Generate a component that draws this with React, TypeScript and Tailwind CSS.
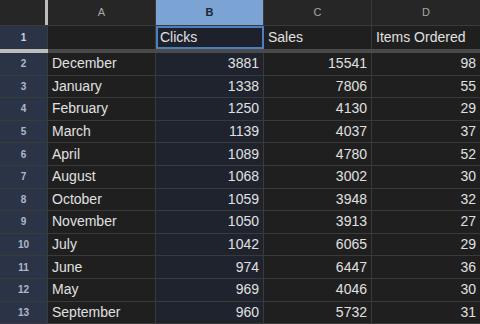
import React from "react";

const rows: [string, number, number, number][] = [
  ["December", 3881, 15541, 98],
  ["January", 1338, 7806, 55],
  ["February", 1250, 4130, 29],
  ["March", 1139, 4037, 37],
  ["April", 1089, 4780, 52],
  ["August", 1068, 3002, 30],
  ["October", 1059, 3948, 32],
  ["November", 1050, 3913, 27],
  ["July", 1042, 6065, 29],
  ["June", 974, 6447, 36],
  ["May", 969, 4046, 30],
  ["September", 960, 5732, 31],
];

const font = { fontFamily: '"Liberation Sans", Arial, sans-serif' };

export default function App() {
  return (
    <div className="w-[480px] h-[324px] overflow-hidden bg-[#1f1f1f] text-[#e0e0e0]" style={font}>
      {/* column headers */}
      <div className="flex h-[26px] bg-[#262626] border-b border-[#3a3a3a]">
        <div className="w-[48px] flex justify-end">
          <div className="w-[3px] h-full bg-[#bdbdbd]" />
        </div>
        <div className="w-[108px] border-r border-[#3a3a3a] flex items-center justify-center text-[11px] text-[#a8a8a8]">A</div>
        <div className="w-[108px] border-r border-[#3a3a3a] bg-[#7ba3d3] flex items-center justify-center text-[11px] font-bold text-[#1c2636]">B</div>
        <div className="w-[108px] border-r border-[#3a3a3a] flex items-center justify-center text-[11px] text-[#a8a8a8]">C</div>
        <div className="w-[108px] flex items-center justify-center text-[11px] text-[#a8a8a8]">D</div>
      </div>

      {/* row 1 */}
      <div className="flex h-[23px] text-[14px]">
        <div className="w-[48px] bg-[#2b3447] border-r border-[#3a3a3a] flex items-center justify-center text-[10px] font-bold text-[#c9d2e6]">1</div>
        <div className="w-[108px] border-r border-[#3a3a3a]" />
        <div className="w-[108px] border-2 border-[#4c7fbf] bg-[#1d212b] flex items-center pl-[2px]">Clicks</div>
        <div className="w-[108px] border-r border-[#3a3a3a] flex items-center pl-1">Sales</div>
        <div className="w-[108px] flex items-center pl-1">Items Ordered</div>
      </div>

      {/* freeze bar */}
      <div className="flex h-[4px]">
        <div className="w-[48px] bg-[#bdbdbd]" />
        <div className="flex-1 bg-[#4a4a4a]" />
      </div>

      {rows.map(([m, c, s, i], idx) => (
        <div key={m} className="flex h-[22.6px] text-[14px] border-b border-[#3a3a3a]">
          <div className="w-[48px] bg-[#2b3447] border-r border-[#3a3a3a] flex items-center justify-center text-[10px] font-bold text-[#aeb8cc]">
            {idx + 2}
          </div>
          <div className="w-[108px] border-r border-[#3a3a3a] flex items-center pl-1">{m}</div>
          <div className="w-[108px] border-r border-[#3a3a3a] bg-[#1f232d] flex items-center justify-end pr-1">{c}</div>
          <div className="w-[108px] border-r border-[#3a3a3a] flex items-center justify-end pr-1">{s}</div>
          <div className="w-[108px] flex items-center justify-end pr-1">{i}</div>
        </div>
      ))}
    </div>
  );
}
